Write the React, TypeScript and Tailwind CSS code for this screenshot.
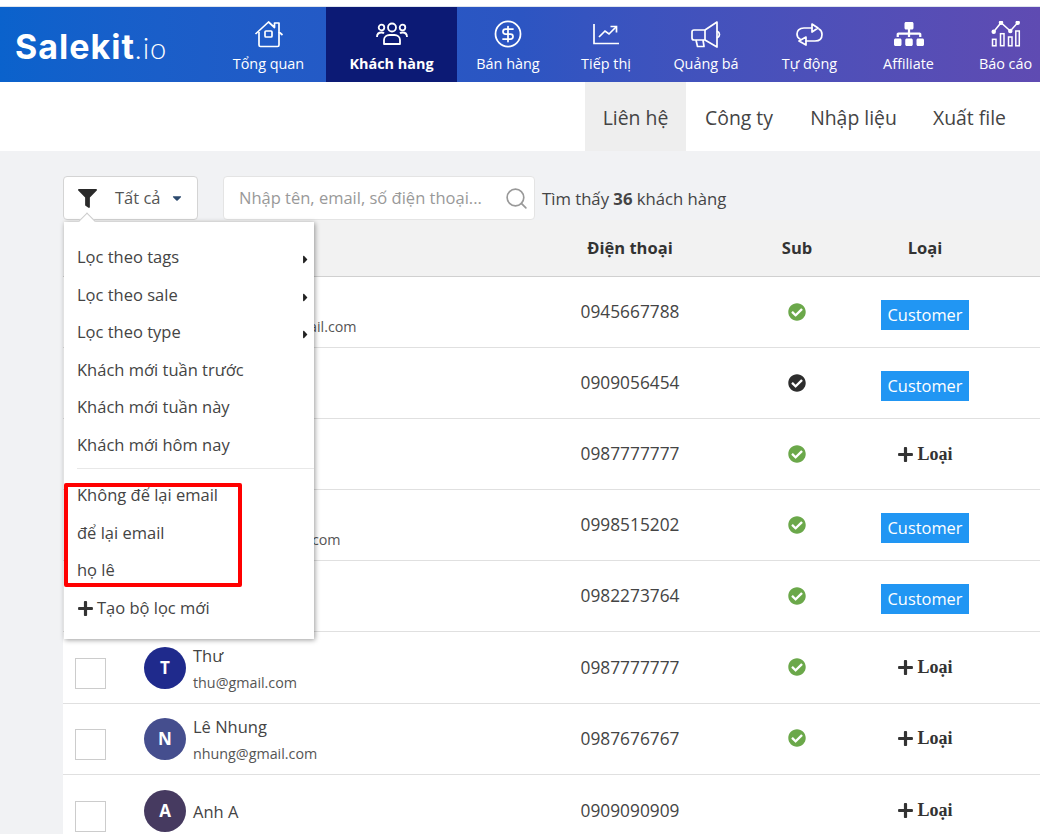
import { FaCaretDown, FaCaretRight, FaCheckCircle, FaFilter, FaPlus, FaSitemap } from "react-icons/fa";
import { CircleDollarSign, Search } from "lucide-react";

const font = { fontFamily: '"Open Sans", "Noto Sans", sans-serif' };

function HomeIcon() {
  return (
    <svg width="30" height="28" viewBox="0 0 30 28" fill="none" stroke="white" strokeWidth="1.7" strokeLinejoin="round">
      <path d="M1.500 14 14.500 2l6 5.500V3h4.500v9l3.500 3" />
      <path d="M5 12v13c0 1 .6 1.500 1.500 1.500h17c1 0 1.500-.5 1.500-1.500V12" />
      <rect x="11" y="11" width="7" height="6" rx="1" />
    </svg>
  );
}

function UsersIcon() {
  return (
    <svg width="32" height="24" viewBox="0 0 32 24" fill="none" stroke="white" strokeWidth="1.8">
      <circle cx="16" cy="5.500" r="4" />
      <circle cx="5.500" cy="5.500" r="2.800" />
      <circle cx="26.500" cy="5.500" r="2.800" />
      <path d="M8 22v-4c0-3 2.500-5 5.500-5h5c3 0 5.500 2 5.500 5v4z" strokeLinejoin="round" />
      <path d="M1 15c0-3 2-4.500 4.500-4.500 1 0 2 .3 2.500 .8M31 15c0-3-2-4.500-4.500-4.500-1 0-2 .3-2.500 .8" />
    </svg>
  );
}

function ChartIcon() {
  return (
    <svg width="26" height="21" viewBox="0 0 26 21" fill="none" stroke="white" strokeWidth="1.7">
      <path d="M1 0v19.500h25" />
      <path d="M6 13l6-6 4 3 7-7" />
      <path d="M17.500 2.500h6v6" />
    </svg>
  );
}

function MegaphoneIcon() {
  return (
    <svg width="30" height="27" viewBox="0 0 30 27" fill="none" stroke="white" strokeWidth="1.7" strokeLinejoin="round">
      <path d="M26 1 14 9H3C2 9 1 10 1 11v6c0 1 1 2 2 2h11l12 7z" />
      <path d="M14 9v10M26 10c2 1 2.500 2 2.500 3.500s-.5 2.500-2.500 3.500" />
      <path d="M5 19l1.500 6.500H13l-1-6.500" />
    </svg>
  );
}

function RepeatIcon() {
  return (
    <svg width="27" height="23" viewBox="0 0 27 23" fill="none" stroke="white" strokeWidth="1.7" strokeLinejoin="round" strokeLinecap="round">
      <path d="M16 1l6 4-6 4z" />
      <path d="M16 5H8C3 5 1 8 1 11c0 2.500 1 4 3 5" />
      <path d="M10 14l-7 4 7 4z" />
      <path d="M10 18h9c5 0 7-3 7-6.500 0-2.500-1-4.500-3-5.500" />
    </svg>
  );
}

function ReportIcon() {
  return (
    <svg width="30" height="26" viewBox="0 0 30 26" fill="none" stroke="white" strokeWidth="1.500">
      <path d="M2.700 10.700 10 1.700l9.300 8.300 7.400-8.300" />
      <circle cx="2.700" cy="10.700" r="1.500" fill="white" />
      <circle cx="10" cy="1.700" r="1.500" fill="white" />
      <circle cx="19.300" cy="10" r="1.500" fill="white" />
      <circle cx="26.700" cy="1.700" r="1.500" fill="white" />
      <rect x="1.500" y="18.300" width="3.500" height="6.500" />
      <rect x="9.500" y="12.700" width="3.500" height="12" />
      <rect x="17.500" y="16" width="3.500" height="8.800" />
      <rect x="24.800" y="10" width="3.500" height="14.800" />
    </svg>
  );
}

const NAV = [
  { label: "Tổng quan", width: "w-[115px]", icon: <HomeIcon /> },
  { label: "Khách hàng", width: "w-[131px]", icon: <UsersIcon />, active: true },
  { label: "Bán hàng", width: "w-[102px]", icon: <CircleDollarSign size={30} strokeWidth={1.4} /> },
  { label: "Tiếp thị", width: "w-[94px]", icon: <ChartIcon /> },
  { label: "Quảng bá", width: "w-[106px]", icon: <MegaphoneIcon /> },
  { label: "Tự động", width: "w-[101px]", icon: <RepeatIcon /> },
  { label: "Affiliate", width: "w-[97px]", icon: <FaSitemap size={30} /> },
  { label: "Báo cáo", width: "w-[97px]", icon: <ReportIcon /> },
];

const TABS = [
  { label: "Liên hệ", width: "w-[101px]", active: true },
  { label: "Công ty", width: "w-[106px]" },
  { label: "Nhập liệu", width: "w-[123px]" },
  { label: "Xuất file", width: "w-[109px]" },
];

// rows 1-5 sit behind the open filter menu: only the end of some emails shows
const ROWS = [
  { tail: "gmail.com", tailPad: "pl-[145px]", phone: "0945667788", sub: "green", customer: true },
  { phone: "0909056454", sub: "dark", customer: true },
  { phone: "0987777777", sub: "green" },
  { tail: "gmail.com", tailPad: "pl-[129px]", phone: "0998515202", sub: "green", customer: true },
  { phone: "0982273764", sub: "green", customer: true },
  { name: "Thư", email: "thu@gmail.com", initial: "T", color: "bg-[#1f2a8c]", phone: "0987777777", sub: "green" },
  { name: "Lê Nhung", email: "nhung@gmail.com", initial: "N", color: "bg-[#454e8e]", phone: "0987676767", sub: "green" },
  { name: "Anh A", initial: "A", color: "bg-[#463a60]", phone: "0909090909", last: true },
];

const FILTERS = ["Lọc theo tags", "Lọc theo sale", "Lọc theo type", "Khách mới tuần trước", "Khách mới tuần này", "Khách mới hôm nay"];

const GRID = "grid grid-cols-[80px_377px_220px_114px_142px_44px] items-center";

function FilterMenu() {
  return (
    <div className="absolute left-[64px] top-[222px] z-10 h-[417px] w-[250px] bg-white pt-[17px] text-[16.5px] text-[#444] shadow-[1px_1px_5px_rgba(0,0,0,0.4)]">
      <div className="absolute left-[17px] top-[-7px] h-3 w-3 rotate-45 border-l border-t border-[#ccc] bg-white" />
      {FILTERS.map((f, i) => (
        <div key={f} className="relative flex h-[37.5px] items-center pl-[13px]">
          {f}
          {i < 3 && <FaCaretRight className="absolute right-[2px] top-[14px] text-[13px] text-[#222]" />}
        </div>
      ))}
      <div className="mt-1 mb-[8px] ml-[13px] h-px bg-[#e8e8e8]" />
      {["Không để lại email", "để lại email", "họ lê"].map((f) => (
        <div key={f} className="flex h-[37.5px] items-center pl-[13px]">
          {f}
        </div>
      ))}
      <div className="flex h-[37.5px] items-center gap-[3px] pl-[13px]">
        <FaPlus className="text-[17px] text-[#333]" />
        Tạo bộ lọc mới
      </div>
      <div className="absolute left-0 top-[261px] h-[104px] w-[178px] rounded-[2px] border-4 border-[#f00]" />
    </div>
  );
}

export default function App() {
  return (
    <div className="relative h-[834px] w-[1040px] overflow-hidden bg-[#f1f2f4] text-[#444]" style={font}>
      <div className="h-[7px] border-b border-[#dfe5ee] bg-white" />
      <header className="flex h-[75px] justify-between overflow-hidden bg-gradient-to-r from-[#0a62cc] via-[#2c55c2] to-[#5f4bb2] text-white">
        <div className="flex items-baseline pl-[15px] pt-[23px] leading-none">
          <span className="text-[34px] font-bold tracking-[1px]" style={{ fontFamily: "Inter, sans-serif" }}>Salekit</span>
          <span className="text-[29px] font-light tracking-[1px]" style={{ fontFamily: "Lato, sans-serif" }}>.io</span>
        </div>
        <nav className="flex shrink-0 translate-x-[14px]">
          {NAV.map((n) => (
            <div key={n.label} className={`flex flex-col items-center pt-[13px] text-[14.4px] ${n.width} ${n.active ? "bg-[#0c1a75] font-bold" : ""}`}>
              <div className="flex h-[28px] items-center justify-center">{n.icon}</div>
              <div className="mt-[6px] whitespace-nowrap leading-5">{n.label}</div>
            </div>
          ))}
        </nav>
      </header>
      <div className="flex h-[69px] justify-end bg-white pr-4 text-[19.4px] text-[#444]">
        {TABS.map((t) => (
          <div key={t.label} className={`flex items-center justify-center pt-[2px] ${t.width} ${t.active ? "bg-[#eeeeee]" : ""}`}>
            {t.label}
          </div>
        ))}
      </div>
      <div className="ml-[63px] mt-[25px] flex h-[44px] items-center">
        <div className="flex h-full w-[135px] items-center rounded border border-[#d4d4d4] bg-white pl-[14px]">
          <FaFilter className="text-[19px] text-[#2a2a2a]" />
          <span className="ml-[18px] pt-px text-[16.5px] text-[#555]">Tất cả</span>
          <FaCaretDown className="ml-[9px] text-[14px] text-[#2c4a6e]" />
        </div>
        <div className="ml-[25px] flex h-full w-[312px] items-center rounded border border-[#e4e4e4] bg-white pl-[15px] pr-[5px] text-[16.5px] text-[#999]">
          <span className="flex-1 whitespace-nowrap pt-px">Nhập tên, email, số điện thoại...</span>
          <Search size={25} strokeWidth={1.6} className="text-[#999]" />
        </div>
        <div className="ml-[7px] whitespace-nowrap pt-px text-[16.7px] text-[#444]">
          Tìm thấy <b>36</b> khách hàng
        </div>
      </div>
      <div className="ml-[63px] w-[977px] bg-white">
        <div className={`${GRID} h-[57px] border-b border-[#d0d0d0] bg-[#f2f2f2] pt-px text-center text-[16.5px] font-bold text-[#333]`}>
          <div />
          <div />
          <div>Điện thoại</div>
          <div>Sub</div>
          <div>Loại</div>
          <div />
        </div>
        {ROWS.map((r) => (
          <div key={r.phone + r.sub} className={`${GRID} border-b border-[#e0e0e0] ${r.last ? "h-[73px]" : "h-[71.1px]"}`}>
            <div className="pl-3">
              <div className="mt-[11px] h-[31px] w-[31px] border border-[#ccc] bg-white" />
            </div>
            {r.name ? (
              <div className="flex items-center gap-[7px] pl-px">
                <div className={`flex h-[42px] w-[42px] items-center justify-center rounded-full text-[17px] font-bold text-white ${r.color}`}>
                  {r.initial}
                </div>
                <div className="pt-[3px]">
                  <div className="text-[16.5px] leading-[24px] text-[#444]">{r.name}</div>
                  {r.email && <div className="mt-[3px] text-[14.3px] leading-[24px] text-[#555]">{r.email}</div>}
                </div>
              </div>
            ) : (
              <div className={`pt-[29px] text-[14.3px] leading-[24px] text-[#555] ${r.tailPad ?? ""}`}>{r.tail}</div>
            )}
            <div className="text-center text-[17.3px] text-[#444]">{r.phone}</div>
            <div className="flex justify-center">
              {r.sub && <FaCheckCircle className={`mb-px text-[18px] ${r.sub === "green" ? "text-[#6ba84a]" : "text-[#2d2d2d]"}`} />}
            </div>
            <div className="flex justify-center">
              {r.customer ? (
                <span className="mt-[6px] flex h-[30px] w-[88px] items-center justify-center bg-[#2196f3] text-[16.4px] text-white">Customer</span>
              ) : (
                <span className="flex items-center gap-[3px] text-[18px] font-bold text-[#333]" style={{ fontFamily: '"Liberation Serif", serif' }}>
                  <FaPlus className="text-[17px]" />
                  Loại
                </span>
              )}
            </div>
            <div />
          </div>
        ))}
      </div>
      <FilterMenu />
    </div>
  );
}
